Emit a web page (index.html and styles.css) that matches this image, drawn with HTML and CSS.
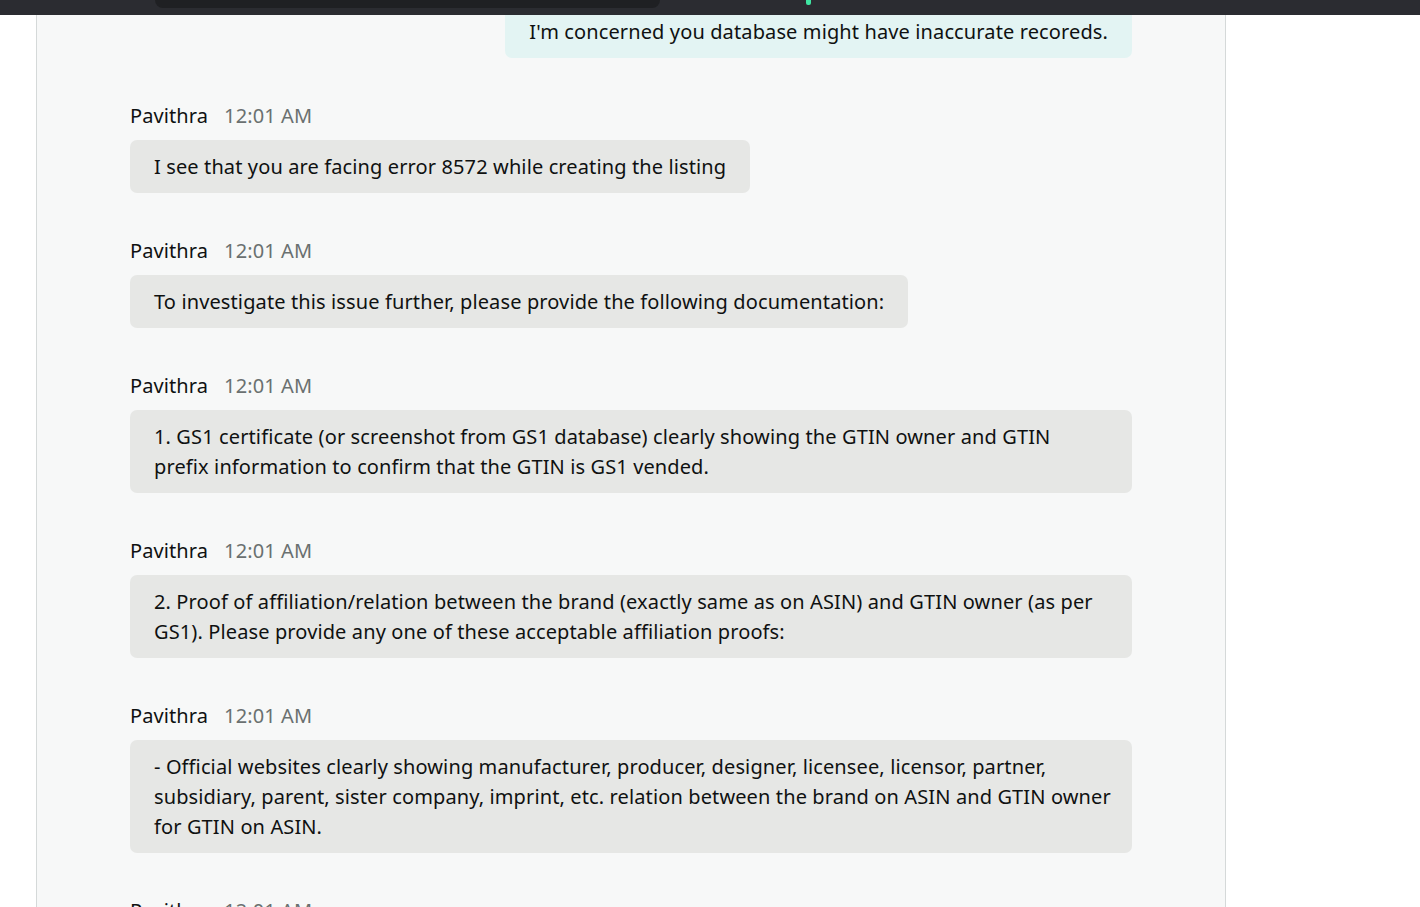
FILE: index.html
```html
<!DOCTYPE html>
<html lang="en">
<head>
    <meta charset="UTF-8">
    <title>Messages</title>
    <link rel="stylesheet" href="styles.css">
</head>
<body>
    <div class="topbar">
        <div class="tab-slot"></div>
        <div class="live-dot"></div>
    </div>

    <div class="chat-panel">
        <div class="msg mine">
            <div class="bubble">I'm concerned you database might have inaccurate recoreds.</div>
        </div>

        <div class="msg">
            <div class="msg-head"><span class="name">Pavithra</span><span class="time">12:01 AM</span></div>
            <div class="bubble">I see that you are facing error 8572 while creating the listing</div>
        </div>

        <div class="msg">
            <div class="msg-head"><span class="name">Pavithra</span><span class="time">12:01 AM</span></div>
            <div class="bubble">To investigate this issue further, please provide the following documentation:</div>
        </div>

        <div class="msg">
            <div class="msg-head"><span class="name">Pavithra</span><span class="time">12:01 AM</span></div>
            <div class="bubble full">1. GS1 certificate (or screenshot from GS1 database) clearly showing the GTIN owner and GTIN<br>prefix information to confirm that the GTIN is GS1 vended.</div>
        </div>

        <div class="msg">
            <div class="msg-head"><span class="name">Pavithra</span><span class="time">12:01 AM</span></div>
            <div class="bubble full">2. Proof of affiliation/relation between the brand (exactly same as on ASIN) and GTIN owner (as per<br>GS1). Please provide any one of these acceptable affiliation proofs:</div>
        </div>

        <div class="msg">
            <div class="msg-head"><span class="name">Pavithra</span><span class="time">12:01 AM</span></div>
            <div class="bubble full">- Official websites clearly showing manufacturer, producer, designer, licensee, licensor, partner,<br>subsidiary, parent, sister company, imprint, etc. relation between the brand on ASIN and GTIN owner<br>for GTIN on ASIN.</div>
        </div>

        <div class="msg">
            <div class="msg-head"><span class="name">Pavithra</span><span class="time">12:01 AM</span></div>
            <div class="bubble">- Invoices from the GTIN owner</div>
        </div>
    </div>
</body>
</html>
```
FILE: styles.css
```css
body {
    margin: 0;
    background: #ffffff;
    font-family: 'Noto Sans', 'Open Sans', sans-serif;
    color: #0f1111;
    overflow: hidden;
}

/* browser strip on top */
.topbar {
    position: fixed;
    top: 0;
    left: 0;
    width: 100%;
    height: 15px;
    background: #2b2c31;
    display: flex;
    align-items: flex-start;
    z-index: 10;
}

.tab-slot {
    margin-left: 155px;
    width: 505px;
    height: 8px;
    background: #1f2023;
    border-radius: 0 0 8px 8px;
}

.live-dot {
    margin-left: 146px;
    width: 5px;
    height: 5px;
    background: #3fe6a2;
    border-radius: 0 0 2px 2px;
}

.chat-panel {
    margin-left: 36px;
    width: 1190px;
    min-height: 1000px;
    box-sizing: border-box;
    background: #f7f8f8;
    border-left: 1px solid #d5d9d9;
    border-right: 1px solid #d5d9d9;
    padding: 5px 93px 0 93px;
    display: flex;
    flex-direction: column;
}

.msg {
    display: flex;
    flex-direction: column;
    align-items: flex-start;
    gap: 12px;
    margin-bottom: 46px;
}

.msg.mine {
    align-items: flex-end;
}

.msg-head {
    display: flex;
    gap: 16px;
    font-size: 20px;
    line-height: 24px;
    letter-spacing: 0.1px;
}

.time {
    color: #6a7070;
}

.bubble {
    background: #e6e7e5;
    border-radius: 7px;
    padding: 12px 24px 11px 24px;
    font-size: 20px;
    line-height: 30px;
    letter-spacing: 0.12px;
    max-width: 100%;
    box-sizing: border-box;
}

.mine .bubble {
    background: #e3f4f3;
}

.bubble.full {
    align-self: stretch;
    white-space: nowrap;
}
```
